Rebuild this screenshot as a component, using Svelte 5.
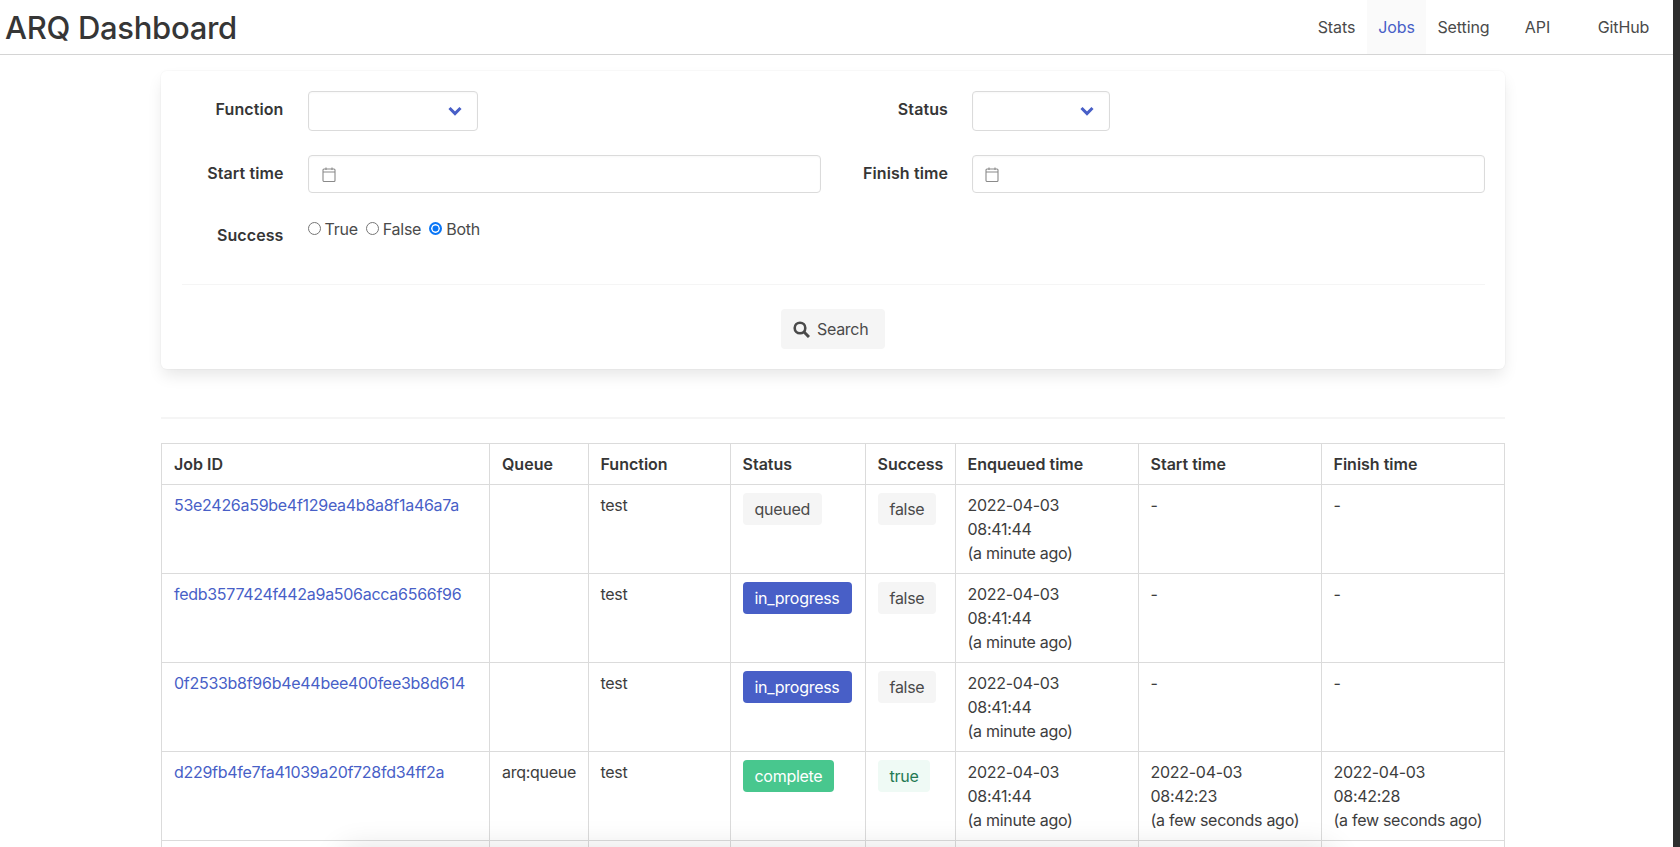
<script>
  const cols = ['Job ID', 'Queue', 'Function', 'Status', 'Success', 'Enqueued time', 'Start time', 'Finish time'];
  const enq = ['2022-04-03', '08:41:44', '(a minute ago)'];
  const rows = [
    { id: '53e2426a59be4f129ea4b8a8f1a46a7a', queue: '', status: 'queued', ok: false, start: null, end: null },
    { id: 'fedb3577424f442a9a506acca6566f96', queue: '', status: 'in_progress', ok: false, start: null, end: null },
    { id: '0f2533b8f96b4e44bee400fee3b8d614', queue: '', status: 'in_progress', ok: false, start: null, end: null },
    { id: 'd229fb4fe7fa41039a20f728fd34ff2a', queue: 'arq:queue', status: 'complete', ok: true,
      start: ['2022-04-03', '08:42:23', '(a few seconds ago)'], end: ['2022-04-03', '08:42:28', '(a few seconds ago)'] },
  ];
  const nav = [
    { label: 'Stats', cls: 'n1' },
    { label: 'Jobs', cls: 'n2 active' },
    { label: 'Setting', cls: 'n3' },
    { label: 'API', cls: 'n4' },
    { label: 'GitHub', cls: 'n5' },
  ];
  const widths = [328, 98.5, 142, 135, 90, 183, 183, 183];
</script>

<div class="page">
  <div class="main">
    <header class="navbar">
      <h1>ARQ Dashboard</h1>
      <nav>
        {#each nav as n}
          <a class={n.cls} href="#top">{n.label}</a>
        {/each}
      </nav>
    </header>

    <div class="container">
      <section class="card">
        <div class="form">
          <div class="row r1">
            <div class="half">
              <span class="label">Function</span>
              <div class="select fn">
                <svg width="14" height="10" viewBox="0 0 14 10"><path d="M1.5 2 7 7.6 12.5 2" fill="none" stroke="#485fc7" stroke-width="3"/></svg>
              </div>
            </div>
            <div class="half h2">
              <span class="label">Status</span>
              <div class="select st">
                <svg width="14" height="10" viewBox="0 0 14 10"><path d="M1.5 2 7 7.6 12.5 2" fill="none" stroke="#485fc7" stroke-width="3"/></svg>
              </div>
            </div>
          </div>
          <div class="row r2">
            <div class="half">
              <span class="label">Start time</span>
              <div class="input">
                <svg width="14" height="15" viewBox="0 0 14 15"><path d="M1 5h12M4 .5v2.5M10 .5v2.5M2 2h10a1 1 0 0 1 1 1v10.500a1 1 0 0 1-1 1H2a1 1 0 0 1-1-1V3a1 1 0 0 1 1-1z" fill="none" stroke="#8a8a8a" stroke-width="1.1"/></svg>
              </div>
            </div>
            <div class="half h2">
              <span class="label">Finish time</span>
              <div class="input wide">
                <svg width="14" height="15" viewBox="0 0 14 15"><path d="M1 5h12M4 .5v2.5M10 .5v2.5M2 2h10a1 1 0 0 1 1 1v10.500a1 1 0 0 1-1 1H2a1 1 0 0 1-1-1V3a1 1 0 0 1 1-1z" fill="none" stroke="#8a8a8a" stroke-width="1.1"/></svg>
              </div>
            </div>
          </div>
          <div class="row r3">
            <div class="half">
              <span class="label">Success</span>
              <div class="radios">
                <span class="radio"><i></i>True</span>
                <span class="radio"><i></i>False</span>
                <span class="radio"><i class="on"></i>Both</span>
              </div>
            </div>
          </div>
        </div>
        <div class="divider"></div>
        <div class="actions">
          <button type="button">
            <svg width="17" height="17" viewBox="0 0 17 17"><circle cx="7" cy="7" r="5.300" fill="none" stroke="#4a4a4a" stroke-width="2.600"/><path d="M10.800 10.800 16 16" stroke="#4a4a4a" stroke-width="3"/></svg>
            Search
          </button>
        </div>
      </section>

      <div class="hr"></div>

      <table>
        <colgroup>
          {#each widths as w}<col style="width:{w}px" />{/each}
        </colgroup>
        <thead>
          <tr>{#each cols as c}<th>{c}</th>{/each}</tr>
        </thead>
        <tbody>
          {#each rows as r}
            <tr>
              <td><a href="#top">{r.id}</a></td>
              <td>{r.queue}</td>
              <td>test</td>
              <td><span class="tag {r.status}">{r.status}</span></td>
              <td><span class="tag {r.ok ? 'yes' : 'no'}">{r.ok}</span></td>
              <td>{#each enq as l}<div>{l}</div>{/each}</td>
              <td>{#if r.start}{#each r.start as l}<div>{l}</div>{/each}{:else}-{/if}</td>
              <td>{#if r.end}{#each r.end as l}<div>{l}</div>{/each}{:else}-{/if}</td>
            </tr>
          {/each}
          <tr class="cut">{#each cols as c}<td></td>{/each}</tr>
        </tbody>
      </table>
    </div>
    <div class="fade"></div>
  </div>
  <div class="strip"></div>
</div>

<style>
  :global(html), :global(body) { margin: 0; height: 100%; overflow: hidden; background: #fff; }
  .page {
    display: flex; height: 847px; overflow: hidden;
    font-family: Inter, "Liberation Sans", sans-serif; font-size: 16px; line-height: 24px; color: #4a4a4a;
  }
  .main { position: relative; flex: 1; min-width: 0; overflow: hidden; }
  .strip { width: 7px; background: #2e2e2e; }
  .navbar {
    display: flex; justify-content: space-between; height: 54px;
    border-bottom: 1px solid #d4d4d4; box-sizing: content-box;
  }
  h1 { margin: 1px 0 0 5px; font-size: 31px; font-weight: 500; letter-spacing: -.3px; color: #363636; line-height: 54px; }
  nav { display: flex; letter-spacing: -.1px; }
  nav a { display: block; line-height: 54px; color: #4a4a4a; text-decoration: none; text-align: center; }
  .n1 { width: 61px; } .n2 { width: 59px; } .n3 { width: 75px; } .n4 { width: 73px; } .n5 { width: 99px; }
  nav a.active { background: #fafafa; color: #485fc7; }
  .container { margin: 16px 168px 0 161px; }
  .card {
    height: 298px; box-sizing: border-box; background: #fff; border-radius: 6px; padding: 20px 20px 0 21px;
    box-shadow: 0 8px 16px -2px rgba(10,10,10,.1), 0 0 0 1px rgba(10,10,10,.02);
  }
  .form { height: 193px; }
  .row { display: flex; }
  .r1 { height: 40px; margin-bottom: 24px; }
  .r2 { height: 38px; margin-bottom: 24px; }
  .half { flex: 0 0 666px; display: flex; }
  .label {
    flex: 0 0 101.5px; margin-right: 24px; text-align: right; font-weight: 600; color: #363636;
    padding-top: 6px; letter-spacing: .1px;
  }
  .h2 .label { flex-basis: 100px; }
  .select, .input {
    box-sizing: border-box; background: #fff; border: 1px solid #dbdbdb; border-radius: 4px;
    display: flex; align-items: center;
    box-shadow: inset 0 .0625em .125em rgba(10,10,10,.03);
  }
  .select { height: 40px; justify-content: flex-end; padding-right: 15px; }
  .fn { width: 170px; }
  .st { width: 138px; }
  .input { height: 38px; width: 513px; padding-left: 13px; }
  .input.wide { width: 513px; padding-left: 12px; }
  .radios { display: flex; height: 24px; letter-spacing: -.25px; }
  .radio { display: flex; align-items: center; margin-right: 8px; }
  .radio i {
    box-sizing: border-box; width: 13px; height: 13px; border-radius: 50%; border: 1px solid #767676;
    margin-right: 4px; margin-top: -1px; background: #fff;
  }
  .radio i.on { border: 2px solid #0a76f6; box-shadow: inset 0 0 0 1.5px #fff; background: #0a76f6; }
  .divider { height: 1px; background: #f5f5f5; margin-bottom: 24px; }
  .actions { display: flex; justify-content: center; }
  button {
    display: flex; align-items: center; gap: 7px; height: 40px; width: 104px; box-sizing: border-box;
    padding: 0 12px; border: 0; border-radius: 4px; background: #f5f5f5; color: #4a4a4a;
    font: inherit; letter-spacing: -.3px; margin-left: -1px;
  }
  .hr { height: 2px; background: #f5f5f5; margin: 48px 0 24px; }
  table { border-collapse: collapse; width: 1343px; table-layout: fixed; color: #3d3d3d; }
  th, td { border: 1px solid #dbdbdb; padding: 8px 12px; text-align: left; vertical-align: top; }
  td { letter-spacing: -.28px; }
  th { font-weight: 600; height: 24px; color: #363636; }
  tbody td { height: 72px; }
  td a { color: #485fc7; text-decoration: none; white-space: nowrap; }
  .tag {
    display: inline-flex; align-items: center; height: 32px; padding: 0 12px; border-radius: 4px;
    vertical-align: top;
  }
  .queued, .no { background: #f5f5f5; color: #4a4a4a; }
  .in_progress { background: #485fc7; color: #fff; }
  .complete { background: #48c78e; color: #fff; }
  .yes { background: #effaf5; color: #257953; }
  .fade {
    position: absolute; left: 345px; width: 985px; top: 852px; height: 40px; border-radius: 8px;
    pointer-events: none; background: #eee; box-shadow: 0 0 30px 4px rgba(0,0,0,.12);
  }
</style>
